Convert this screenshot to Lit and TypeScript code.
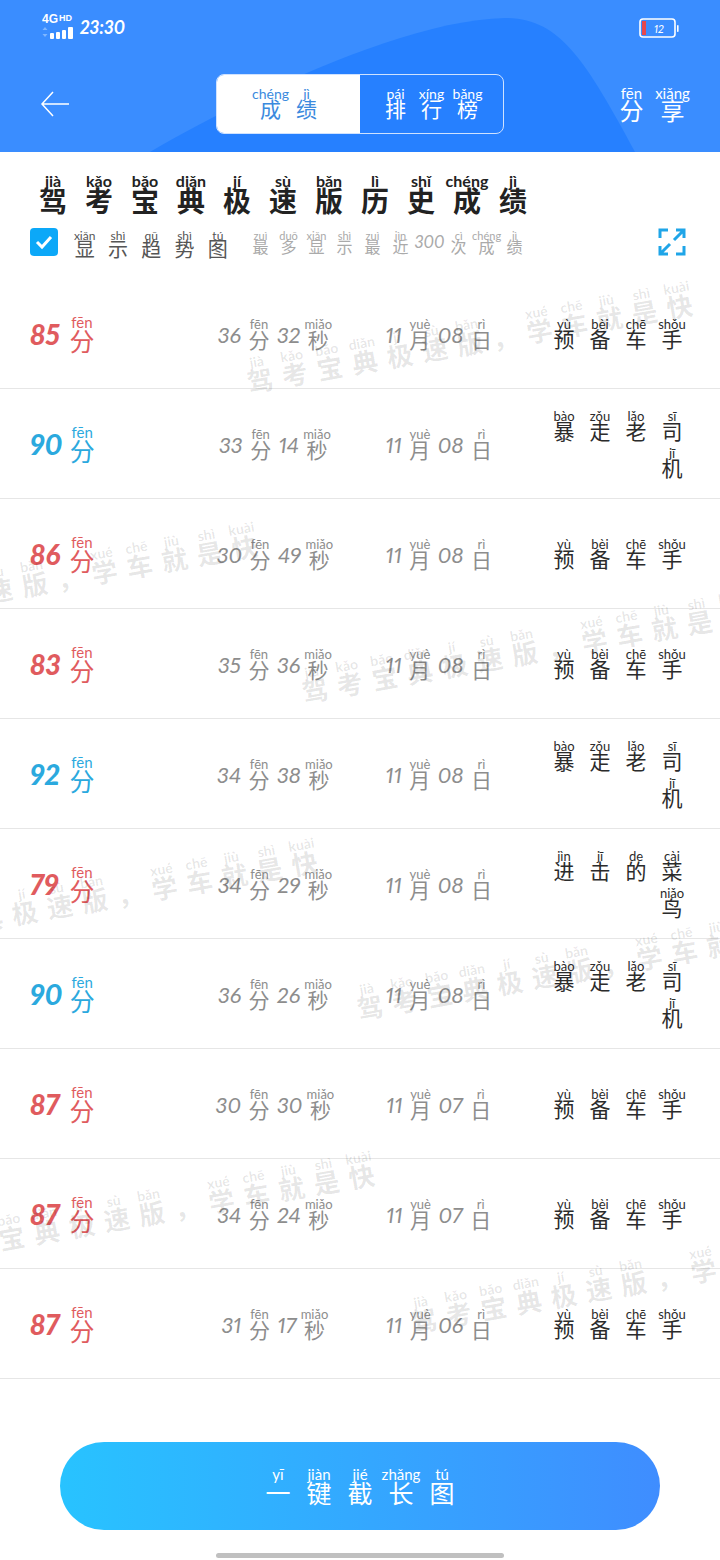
import { css, html, LitElement, svg } from 'lit';
import { customElement } from 'lit/decorators.js';

type Pair = [string, string];

// "ni:你 hao:好" -> pairs
const pairs = (s: string): Pair[] =>
    s.split(' ').map(p => p.split(':') as Pair);

const py = (s: string) => pairs(s).map(([pin, han]) => html`
    <span class="c"><span class="p">${ pin }</span><span class="h">${ han }</span></span>`);

const NORMAL = 'yù:预 bèi:备 chē:车 shǒu:手';
const CRAZY = 'bào:暴 zǒu:走 lǎo:老 sī:司 jī:机';
const ROOKIE = 'jìn:进 jī:击 de:的 cài:菜 niǎo:鸟';

const rows = [
    { score: 85, min: 36, sec: 32, day: '08', label: NORMAL },
    { score: 90, min: 33, sec: 14, day: '08', label: CRAZY },
    { score: 86, min: 30, sec: 49, day: '08', label: NORMAL },
    { score: 83, min: 35, sec: 36, day: '08', label: NORMAL },
    { score: 92, min: 34, sec: 38, day: '08', label: CRAZY },
    { score: 79, min: 34, sec: 29, day: '08', label: ROOKIE },
    { score: 90, min: 36, sec: 26, day: '08', label: CRAZY },
    { score: 87, min: 30, sec: 30, day: '07', label: NORMAL },
    { score: 87, min: 34, sec: 24, day: '07', label: NORMAL },
    { score: 87, min: 31, sec: 17, day: '06', label: NORMAL },
];

const WATERMARK = 'jià:驾 kǎo:考 bǎo:宝 diǎn:典 jí:极 sù:速 bǎn:版 :， xué:学 chē:车 jiù:就 shì:是 kuài:快';
// where the first glyph of each repeated watermark sits on the page
const marks = [
    [238, 358], [-197, 599], [293, 668], [-137, 915],
    [348, 985], [-80, 1228], [402, 1298],
];

@customElement('app-root')
export class AppRoot extends LitElement {
    static styles = css`
        :host {
            display: block;
            position: relative;
            width: 720px;
            height: 1560px;
            overflow: hidden;
            background: #fff;
            font-family: "Noto Sans CJK SC", "Noto Sans", sans-serif;
            font-variant-numeric: proportional-nums;
        }

        .c {
            display: inline-flex;
            flex-direction: column;
            align-items: center;
            flex: none;
        }

        .p {
            font-family: "Lato", "Noto Sans", sans-serif;
            line-height: 1;
            white-space: nowrap;
            min-height: 1em;
        }

        .h {
            line-height: 1;
        }

        /* header */
        .header {
            position: relative;
            height: 152px;
            background: #3a8dff;
            color: #fff;
            overflow: hidden;
        }

        .blob {
            position: absolute;
            top: 0;
            left: 0;
        }

        .status {
            position: relative;
            display: flex;
            align-items: center;
            justify-content: space-between;
            height: 18px;
            padding: 18px 41px 0 42px;
        }

        .status-left {
            display: flex;
            align-items: center;
            gap: 6px;
        }

        .time {
            font-family: "Lato", sans-serif;
            font-style: italic;
            font-size: 18px;
            font-weight: 700;
        }

        .battery {
            position: relative;
            top: 1px;
        }

        .nav {
            position: relative;
            display: flex;
            align-items: center;
            margin-top: 38px;
            height: 60px;
            padding: 0 27px 0 40px;
        }

        .back {
            width: 176px;
            flex: none;
        }

        .back svg {
            display: block;
        }

        .tabs {
            display: flex;
            width: 288px;
            height: 60px;
            flex: none;
            box-sizing: border-box;
            border: 1px solid #cfe2ff;
            border-radius: 8px;
            overflow: hidden;
        }

        .tab {
            display: flex;
            align-items: center;
            justify-content: center;
            flex: 1;
            padding-bottom: 2px;
        }

        .tab.on {
            background: #fff;
            color: #3b8ade;
        }

        .tab .c {
            width: 36px;
        }

        .tab .p {
            font-size: 14px;
        }

        .tab .h {
            font-size: 21px;
            margin-top: -3px;
        }

        .share {
            display: flex;
            margin-left: auto;
        }

        .share .c {
            width: 41px;
        }

        .share .p {
            font-size: 15px;
        }

        .share .h {
            font-size: 24px;
            margin-top: -3px;
        }

        /* title block */
        .title {
            display: flex;
            padding: 21px 0 0 30px;
            color: #222;
            font-weight: 700;
        }

        .title .c {
            width: 46px;
        }

        .title .p {
            font-size: 16px;
        }

        .title .h {
            font-size: 28px;
            margin-top: -3px;
        }

        .filters {
            display: flex;
            align-items: center;
            height: 36px;
            margin-top: 10px;
            padding: 0 34px 0 30px;
        }

        .check {
            width: 28px;
            height: 28px;
            flex: none;
            border-radius: 4px;
            background: #0ca8f8;
            display: grid;
            place-items: center;
            margin-right: 10px;
        }

        .trend {
            display: flex;
            color: #555;
            padding-top: 5px;
        }

        .trend .c {
            width: 33.3px;
        }

        .trend .p {
            font-size: 12px;
        }

        .trend .h {
            font-size: 20px;
            margin-top: -3px;
        }

        .hint {
            display: flex;
            align-items: flex-end;
            margin-left: 12px;
            color: #aaa;
        }

        .hint .c {
            width: 28px;
        }

        .hint .p {
            font-size: 11px;
        }

        .hint .h {
            font-size: 16px;
            margin-top: -3px;
        }

        .hint .n {
            font-family: "Lato", sans-serif;
            font-style: italic;
            font-size: 17px;
            line-height: 24px;
        }

        .expand {
            margin-left: auto;
            display: block;
        }

        /* list */
        .list {
            margin-top: 19px;
        }

        .row {
            display: grid;
            grid-template-columns: 150px 190px 141px 1fr;
            align-items: center;
            box-sizing: border-box;
            height: 110px;
            padding: 0 30px;
            border-bottom: 1px solid #e6e6e6;
        }

        .score {
            display: flex;
            align-items: center;
            gap: 5px;
        }

        .score .n {
            min-width: 32px;
            font-family: "Lato", sans-serif;
            font-style: italic;
            font-weight: 900;
            font-size: 28px;
            line-height: 1;
        }

        .score .c {
            width: 30px;
        }

        .score .p {
            font-size: 15px;
        }

        .score .h {
            font-size: 25px;
            margin-top: -2px;
        }

        .red {
            color: #e05b5e;
        }

        .blue {
            color: #2ba9de;
        }

        .span {
            display: flex;
            align-items: center;
            justify-content: center;
            gap: 4px;
            color: #8d8d8d;
        }

        .span .n {
            font-family: "Lato", sans-serif;
            font-style: italic;
            font-size: 22px;
            line-height: 1;
            padding-top: 2px;
        }

        .span .c {
            width: 28px;
        }

        .span .p {
            font-size: 13px;
        }

        .span .h {
            font-size: 21px;
            margin-top: -2px;
        }

        .label {
            display: flex;
            flex-wrap: wrap;
            justify-content: flex-end;
            justify-self: end;
            width: 144px;
            row-gap: 6px;
            color: #2b2b2b;
        }

        .label .c {
            width: 36px;
        }

        .label .p {
            font-size: 13px;
        }

        .label .h {
            font-size: 21px;
            margin-top: -3px;
        }

        /* bottom */
        .shot {
            display: flex;
            align-items: center;
            justify-content: center;
            height: 88px;
            margin: 63px 60px 0;
            border-radius: 44px;
            background: linear-gradient(90deg, #28c3ff, #3f8dff);
            color: #fff;
        }

        .shot .c {
            width: 41px;
        }

        .shot .p {
            font-size: 15px;
        }

        .shot .h {
            font-size: 25px;
            margin-top: -2px;
        }

        .home {
            width: 288px;
            height: 5px;
            margin: 23px auto 0;
            border-radius: 3px;
            background: #c0c0c0;
        }

        /* watermark lies over the list */
        .mark {
            position: absolute;
            display: flex;
            transform: rotate(-10deg);
            transform-origin: 0 0;
            color: rgba(0, 0, 0, 0.1);
            font-weight: 700;
            pointer-events: none;
        }

        .mark .c {
            width: 35.5px;
        }

        .mark .p {
            font-size: 14px;
        }

        .mark .h {
            font-size: 26px;
            margin-top: -2px;
        }
    `;

    private signal() {
        return html`<svg width="32" height="30" viewBox="0 0 32 30">
            <text x="0" y="11" fill="#fff" font-family="Liberation Sans" font-weight="700" font-size="12">4G</text>
            <text x="17" y="9" fill="#fff" font-family="Liberation Sans" font-weight="700" font-size="9">HD</text>
            <path d="M3 15l2.5 3h-5zM3 25l2.5-3h-5z" fill="#7fb6ff"/>
            <g fill="#fff">
                <rect x="8" y="21" width="4" height="6" rx="1"/>
                <rect x="14" y="20" width="4" height="7" rx="1"/>
                <rect x="20" y="18" width="4" height="9" rx="1"/>
                <rect x="26" y="15" width="5" height="12" rx="1"/>
            </g>
        </svg>`;
    }

    private battery() {
        return html`<svg class="battery" width="40" height="22" viewBox="0 0 40 22">
            <rect x="1" y="2" width="35" height="18" rx="3" fill="none" stroke="#fff" stroke-width="1.6"/>
            <rect x="3" y="4" width="4" height="14" fill="#e5484d"/>
            <rect x="38" y="8" width="1.6" height="7" rx="0.8" fill="#fff"/>
            <text x="15" y="15.5" fill="#fff" font-family="Lato" font-style="italic" font-size="11">12</text>
        </svg>`;
    }

    private expand() {
        const corners = svg`
            <path d="M2 10V2h8M26 18v8h-8"/>
            <path d="M18 2h8v8M26 2L16 12"/>
            <path d="M2 18v8h8M2 26l10-10"/>`;
        return html`<svg class="expand" width="28" height="28" viewBox="0 0 28 28" fill="none"
            stroke="#1fa5e8" stroke-width="3">${ corners }</svg>`;
    }

    protected render() {
        return html`
            <div class="header">
                <svg class="blob" width="720" height="152" viewBox="0 0 720 152">
                    <path d="M150 152C230 105 400 20 505 18C560 18 585 60 635 152Z" fill="#2680ff"/>
                </svg>
                <div class="status">
                    <div class="status-left">${ this.signal() }<span class="time">23:30</span></div>
                    ${ this.battery() }
                </div>
                <div class="nav">
                    <div class="back">
                        <svg width="30" height="26" viewBox="0 0 30 26" fill="none" stroke="#fff" stroke-width="1.5">
                            <path d="M29 13H2M13 1L2 13l11 12"/>
                        </svg>
                    </div>
                    <div class="tabs">
                        <div class="tab on">${ py('chéng:成 jì:绩') }</div>
                        <div class="tab">${ py('pái:排 xíng:行 bǎng:榜') }</div>
                    </div>
                    <div class="share">${ py('fēn:分 xiǎng:享') }</div>
                </div>
            </div>

            <div class="title">${ py('jià:驾 kǎo:考 bǎo:宝 diǎn:典 jí:极 sù:速 bǎn:版 lì:历 shǐ:史 chéng:成 jì:绩') }</div>

            <div class="filters">
                <div class="check">
                    <svg width="20" height="20" viewBox="0 0 20 20" fill="none" stroke="#fff" stroke-width="3">
                        <path d="M3 10l5 5 9-10"/>
                    </svg>
                </div>
                <div class="trend">${ py('xiǎn:显 shì:示 qū:趋 shì:势 tú:图') }</div>
                <div class="hint">
                    ${ py('zuì:最 duō:多 xiǎn:显 shì:示 zuì:最 jìn:近') }
                    <span class="n">300</span>
                    ${ py('cì:次 chéng:成 jì:绩') }
                </div>
                ${ this.expand() }
            </div>

            <div class="list">
                ${ rows.map(r => html`
                    <div class="row">
                        <div class="score ${ r.score >= 90 ? 'blue' : 'red' }">
                            <span class="n">${ r.score }</span>${ py('fēn:分') }
                        </div>
                        <div class="span">
                            <span class="n">${ r.min }</span>${ py('fēn:分') }
                            <span class="n">${ r.sec }</span>${ py('miǎo:秒') }
                        </div>
                        <div class="span">
                            <span class="n">11</span>${ py('yuè:月') }
                            <span class="n">${ r.day }</span>${ py('rì:日') }
                        </div>
                        <div class="label">${ py(r.label) }</div>
                    </div>`) }
            </div>

            <div class="shot">${ py('yī:一 jiàn:键 jié:截 zhǎng:长 tú:图') }</div>
            <div class="home"></div>

            ${ marks.map(([x, y]) => html`
                <div class="mark" style="left:${ x }px;top:${ y }px">${ py(WATERMARK) }</div>`) }
        `;
    }
}
